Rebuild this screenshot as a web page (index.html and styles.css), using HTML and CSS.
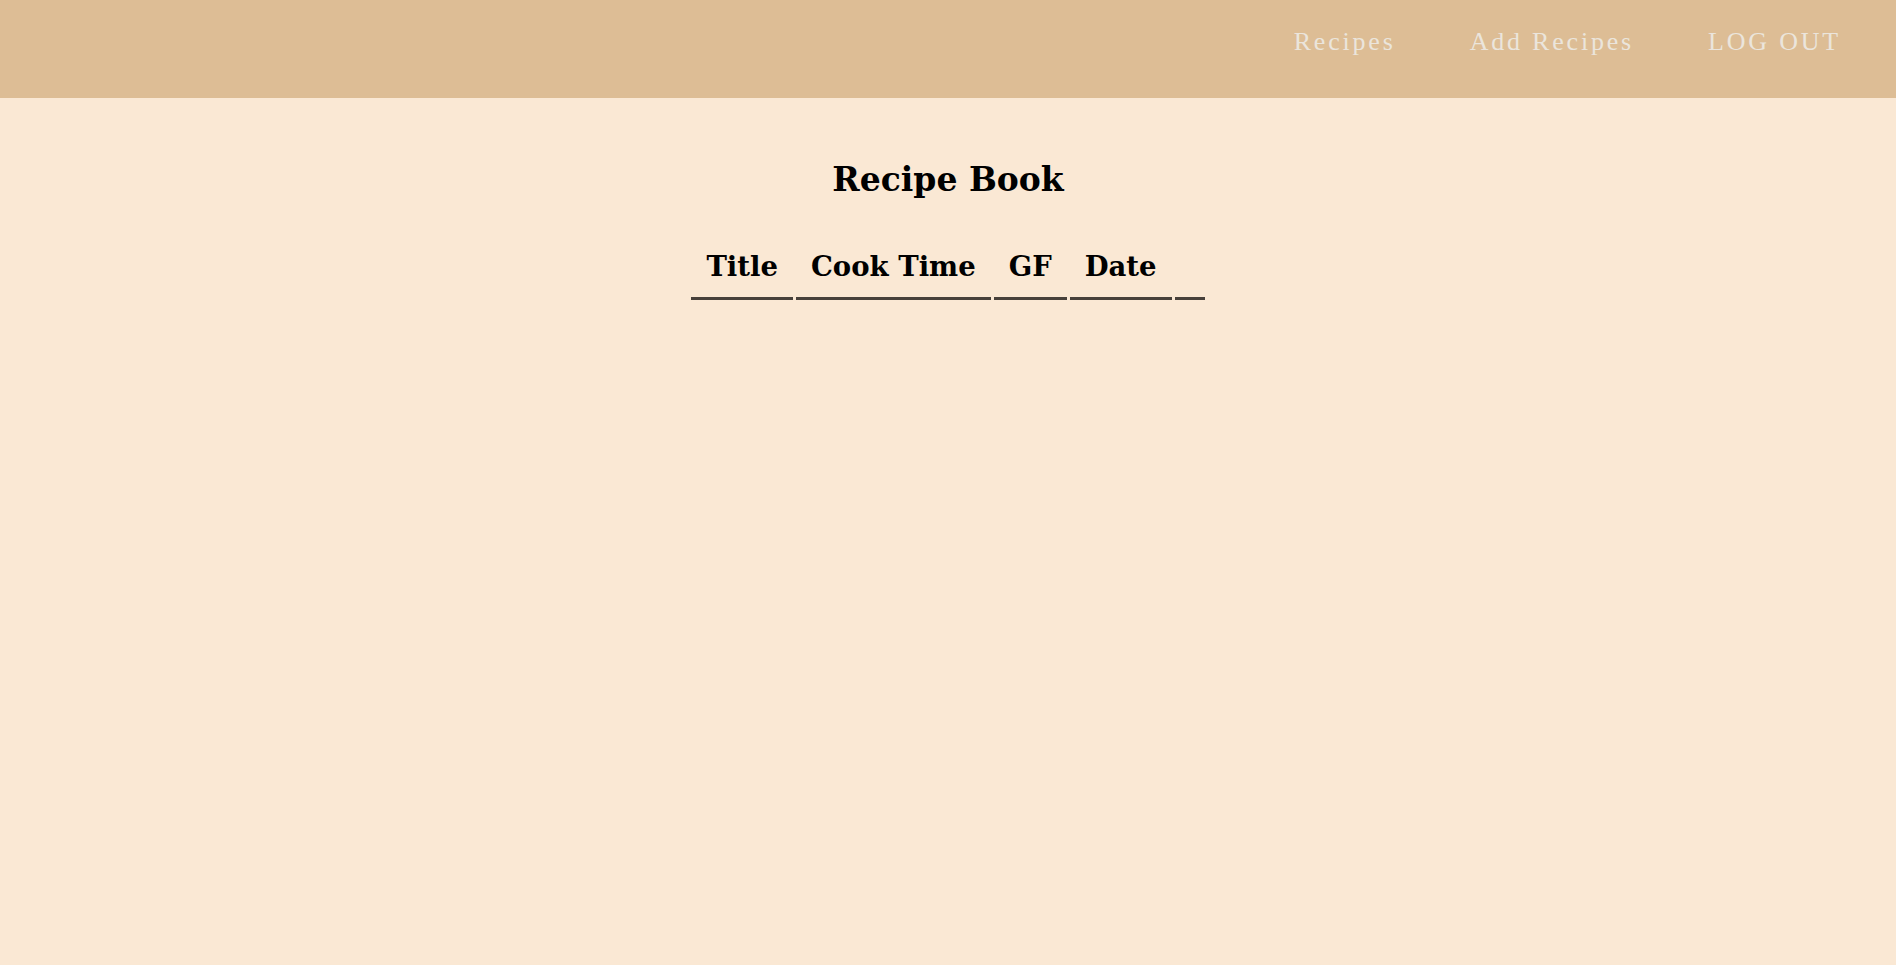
FILE: index.html
```html
<!DOCTYPE html>
<html lang="en">
<head>
<meta charset="utf-8">
<title>Recipe Book</title>
<link rel="stylesheet" href="styles.css">
</head>
<body>
<header class="topbar">
  <nav class="nav">
    <a class="nav-link" href="#">Recipes</a>
    <a class="nav-link" href="#">Add Recipes</a>
    <a class="nav-link" href="#">LOG OUT</a>
  </nav>
</header>
<main class="content">
  <h1 class="page-title">Recipe Book</h1>
  <table class="recipes">
    <thead>
      <tr>
        <th>Title</th>
        <th>Cook Time</th>
        <th>GF</th>
        <th>Date</th>
        <th></th>
      </tr>
    </thead>
    <tbody></tbody>
  </table>
</main>
</body>
</html>
```
FILE: styles.css
```css
html, body {
  margin: 0;
  padding: 0;
}
body {
  background: #fae8d4;
  font-family: "DejaVu Serif", "Liberation Serif", serif;
  color: #000;
  min-height: 965px;
}
.topbar {
  background: #ddbd95;
  height: 98px;
  box-sizing: border-box;
  padding: 27px 55px 0 0;
}
.nav {
  display: flex;
  justify-content: flex-end;
  gap: 74px;
}
.nav-link {
  font-family: "Liberation Serif", "Times New Roman", serif;
  color: #ebe5dc;
  text-decoration: none;
  font-size: 26px;
  letter-spacing: 2.8px;
  line-height: normal;
}
.content {
  display: flex;
  flex-direction: column;
  align-items: center;
}
.page-title {
  font-size: 33px;
  font-weight: bold;
  line-height: normal;
  margin: 62px 0 32px;
}
.recipes {
  border-collapse: separate;
  border-spacing: 3px;
}
.recipes th {
  font-size: 27.5px;
  font-weight: bold;
  padding: 15.5px 15px 15px;
  border-bottom: 3px solid #47403a;
  line-height: normal;
}
```
